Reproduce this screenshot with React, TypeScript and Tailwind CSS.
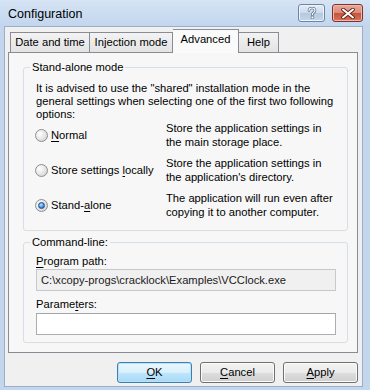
import React from "react";

function Radio({ checked }: { checked?: boolean }) {
  return (
    <span className="w-[13px] h-[13px] rounded-full border border-[#8e8f8f] bg-[radial-gradient(circle_at_35%_35%,#ffffff,#e4e4e4_55%,#c6c6c6)] flex items-center justify-center shrink-0">
      {checked && (
        <span className="w-[7px] h-[7px] rounded-full border border-[#1b4f8a] bg-[radial-gradient(circle_at_40%_35%,#bfe8ff,#3a8ee0_60%,#1a5aa8)]" />
      )}
    </span>
  );
}

function Btn({ children, def }: { children: React.ReactNode; def?: boolean }) {
  return (
    <div
      className={
        def
          ? "w-[75px] h-[21px] rounded-[3px] border border-[#3c7fb1] shadow-[inset_0_0_0_1px_#b7e1f8] bg-[linear-gradient(to_bottom,#eaf6fd_0%,#d9f0fc_50%,#bee6fd_51%,#a7d9f5_100%)] flex items-center justify-center"
          : "w-[75px] h-[21px] rounded-[3px] border border-[#707070] shadow-[inset_0_0_0_1px_#fbfbfb] bg-[linear-gradient(to_bottom,#f2f2f2_0%,#ebebeb_50%,#dddddd_51%,#cfcfcf_100%)] flex items-center justify-center"
      }
    >
      {children}
    </div>
  );
}

function U({ children }: { children: React.ReactNode }) {
  return <span className="underline underline-offset-[2px]">{children}</span>;
}

export default function App() {
  return (
    <div className="w-[370px] h-[390px] flex flex-col bg-[#c3d6ed] font-['Liberation_Sans',Arial,sans-serif] text-[11.2px] leading-[13px] text-black overflow-hidden select-none">
      {/* Title bar */}
      <div className="h-[26px] shrink-0 flex items-start pl-[8px] pr-[7px] bg-[linear-gradient(to_bottom,#d6e4f4,#c2d6ee)]">
        <span className="mt-[7px] text-[12.5px] leading-[15px] text-[#000]">Configuration</span>
        <div className="ml-auto mt-[4px] flex gap-[7px]">
          <div className="w-[27px] h-[18px] rounded-[3px] border border-[#6f84a0] bg-[linear-gradient(to_bottom,#e3ecf6_0%,#cbdaec_50%,#b4c8e1_51%,#c4d6ec_100%)] shadow-[inset_0_0_0_1px_#eef4fb] flex items-center justify-center">
            <svg width="10" height="12" viewBox="0 0 10 12">
              <path
                d="M2 3.5 C2 1.5 3.5 1 5 1 C6.8 1 8 2 8 3.5 C8 5 6.5 5.5 5.8 6.3 C5.4 6.8 5.4 7.3 5.4 8"
                fill="none"
                stroke="#5c6b80"
                strokeWidth="2.6"
                strokeLinecap="round"
              />
              <path
                d="M2 3.5 C2 1.5 3.5 1 5 1 C6.8 1 8 2 8 3.5 C8 5 6.5 5.5 5.8 6.3 C5.4 6.8 5.4 7.3 5.4 8"
                fill="none"
                stroke="#ffffff"
                strokeWidth="1.2"
                strokeLinecap="round"
              />
              <circle cx="5.4" cy="10.5" r="1.4" fill="#ffffff" stroke="#5c6b80" strokeWidth="0.8" />
            </svg>
          </div>
          <div className="w-[31px] h-[18px] rounded-[3px] border border-[#7d3327] bg-[linear-gradient(to_bottom,#e9a99b_0%,#d98a78_50%,#c7523a_51%,#d8725a_100%)] shadow-[inset_0_0_0_1px_#f0b9ad] flex items-center justify-center">
            <svg width="14" height="11" viewBox="0 0 14 11">
              <path d="M2 1.5 L12 9.5 M12 1.5 L2 9.5" stroke="#5b1d12" strokeWidth="3.6" strokeLinecap="round" />
              <path d="M2 1.5 L12 9.5 M12 1.5 L2 9.5" stroke="#ffffff" strokeWidth="2" strokeLinecap="round" />
            </svg>
          </div>
        </div>
      </div>

      {/* Client area */}
      <div className="flex-1 ml-[4px] mr-[7px] mb-[3px] bg-[#f0f0f0] border border-[#9aaec6] flex flex-col">
        {/* Tabs */}
        <div className="h-[25px] pt-[1px] ml-[5px] flex items-end">
          <div className="w-[80px] h-[20px] border border-b-0 border-[#898c95] bg-[linear-gradient(to_bottom,#f3f3f3,#e3e3e3)] flex items-center justify-center">
            Date and time
          </div>
          <div className="w-[83px] h-[20px] border border-b-0 border-l-0 border-[#898c95] bg-[linear-gradient(to_bottom,#f3f3f3,#e3e3e3)] flex items-center justify-center">
            Injection mode
          </div>
          <div className="w-[66px] h-[24px] -mb-px relative z-10 border border-b-0 border-l-0 border-[#898c95] bg-[#fafafa] flex items-start justify-center pt-[3px]">
            Advanced
          </div>
          <div className="w-[40px] h-[20px] border border-b-0 border-l-0 border-[#898c95] bg-[linear-gradient(to_bottom,#f3f3f3,#e3e3e3)] flex items-center justify-center">
            Help
          </div>
        </div>

        {/* Panel */}
        <div className="h-[301px] ml-[3px] mr-[4px] border border-[#898c95] bg-[#f7f7f7] pt-[7px] pl-[14px] pr-[9px] flex flex-col">
          <fieldset className="border border-[#d5dfe5] rounded-[3px] p-0 m-0">
            <legend className="ml-[6px] px-[2px] leading-[14px]">Stand-alone mode</legend>
            <div className="pl-[12px] pr-[11px] pt-[8px] pb-[11px] flex flex-col">
              <p className="leading-[13px]">
                It is advised to use the "shared" installation mode in the general settings when selecting one of the first two following options:
              </p>
              <div className="flex flex-col gap-[7px]">
                <div className="grid grid-cols-[130px_1fr] items-center">
                  <div className="flex items-center gap-[3px] -ml-[1px]">
                    <Radio />
                    <span>
                      <U>N</U>ormal
                    </span>
                  </div>
                  <div className="leading-[14px]">
                    Store the application settings in
                    <br />
                    the main storage place.
                  </div>
                </div>
                <div className="grid grid-cols-[130px_1fr] items-center">
                  <div className="flex items-center gap-[3px] -ml-[1px]">
                    <Radio />
                    <span>
                      Store settings <U>l</U>ocally
                    </span>
                  </div>
                  <div className="leading-[14px]">
                    Store the application settings in
                    <br />
                    the application's directory.
                  </div>
                </div>
                <div className="grid grid-cols-[130px_1fr] items-center">
                  <div className="flex items-center gap-[3px] -ml-[1px]">
                    <Radio checked />
                    <span>
                      Stand-<U>a</U>lone
                    </span>
                  </div>
                  <div className="leading-[14px]">
                    The application will run even after
                    <br />
                    copying it to another computer.
                  </div>
                </div>
              </div>
            </div>
          </fieldset>

          <fieldset className="mt-[4px] border border-[#d5dfe5] rounded-[3px] p-0 m-0">
            <legend className="ml-[6px] px-[2px] leading-[14px]">Command-line:</legend>
            <div className="pl-[12px] pr-[11px] pt-[6px] pb-[7px] flex flex-col">
              <div className="leading-[13px]">
                <U>P</U>rogram path:
              </div>
              <div className="mt-[1px] h-[22px] border border-[#c5c8cd] bg-[#f0f0f0] flex items-center pl-[4px] text-[#1a1a1a]">
                C:\xcopy-progs\cracklock\Examples\VCClock.exe
              </div>
              <div className="mt-[7px] leading-[13px]">
                Parame<U>t</U>ers:
              </div>
              <div className="mt-[2px] h-[22px] border border-[#abadb3] border-t-[#a3a6ad] bg-white" />
            </div>
          </fieldset>
        </div>

        {/* Buttons */}
        <div className="mt-[9px] mr-[4px] flex justify-end gap-[8px]">
          <Btn def>
            <span>
              <U>O</U>K
            </span>
          </Btn>
          <Btn>
            <span>
              <U>C</U>ancel
            </span>
          </Btn>
          <Btn>
            <span>
              <U>A</U>pply
            </span>
          </Btn>
        </div>
      </div>
    </div>
  );
}
